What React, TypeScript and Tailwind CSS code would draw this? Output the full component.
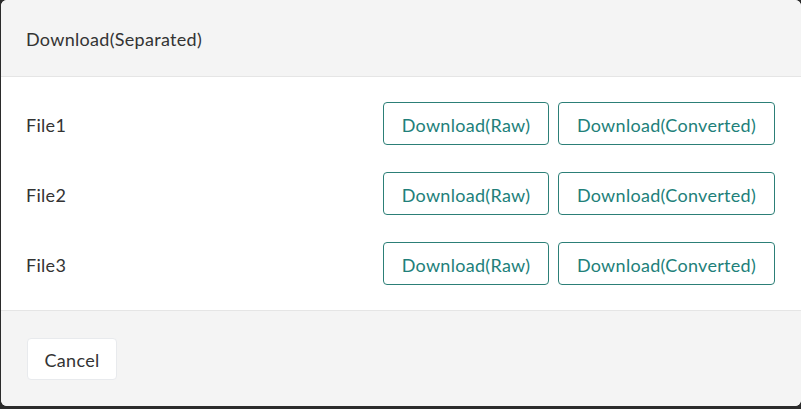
const files = ["File1", "File2", "File3"];

const App = () => {
  return (
    <div
      className="w-[801px] h-[409px] bg-[#2b2b2b] pl-[1px] overflow-hidden"
      style={{ fontFamily: "Lato, 'Noto Sans', sans-serif" }}
    >
      <div className="w-[800px] h-[406px] rounded-[6px] overflow-hidden bg-white flex flex-col text-[18px] tracking-[0.3px]">
        {/* Header */}
        <div className="h-[77px] bg-[#f4f4f4] border-b border-[#e5e5e5] pl-[25px] flex items-center">
          <h2 className="text-[#333333] pt-[2px]">Download(Separated)</h2>
        </div>

        {/* Body */}
        <div className="flex-1 bg-white pl-[25px] pr-[26px] py-[25px] flex flex-col gap-[27px]">
          {files.map((f) => (
            <div key={f} className="flex items-center justify-between h-[43px]">
              <span className="text-[#333333] pt-[3px]">{f}</span>
              <div className="flex gap-[9px]">
                <button className="w-[166px] h-[43px] pt-[3px] border border-[#2c7f77] rounded-[4px] text-[#217f7a] bg-white">
                  Download(Raw)
                </button>
                <button className="w-[217px] h-[43px] pt-[3px] border border-[#2c7f77] rounded-[4px] text-[#217f7a] bg-white">
                  Download(Converted)
                </button>
              </div>
            </div>
          ))}
        </div>

        {/* Footer */}
        <div className="h-[96px] bg-[#f4f4f4] border-t border-[#e5e5e5] pl-[26px] flex items-center">
          <button className="w-[90px] h-[42px] pt-[3px] bg-white border border-[#e8eaed] rounded-[4px] text-[#333333]">
            Cancel
          </button>
        </div>
      </div>
    </div>
  );
};

export default App;
